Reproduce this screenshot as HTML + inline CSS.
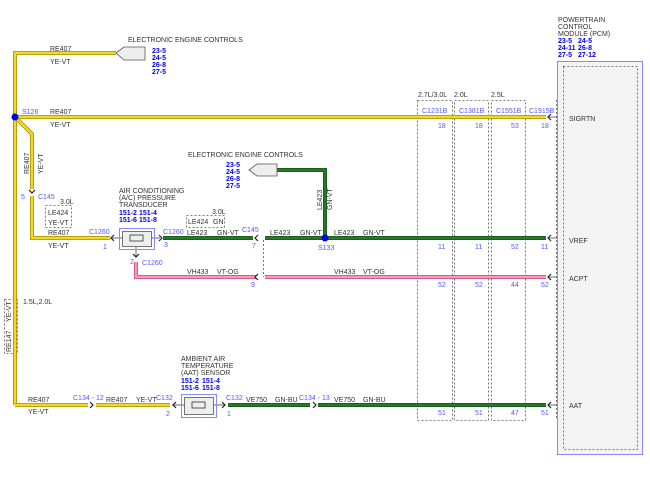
<!DOCTYPE html>
<html><head><style>
html,body{margin:0;padding:0;background:#fff;width:650px;height:481px;overflow:hidden}
svg text{font-family:"Liberation Sans",sans-serif;font-size:7px;fill:#333}
.b{fill:#55f}
.bb{fill:#00e;font-weight:bold}
</style></head><body>
<svg width="650" height="481" viewBox="0 0 650 481" xmlns="http://www.w3.org/2000/svg">
<rect x="557.5" y="61.5" width="85" height="393" fill="#f3f3f3" stroke="#88f" stroke-width="1"/>
<rect x="563.5" y="66.5" width="74" height="383" fill="none" stroke="#555" stroke-dasharray="2,2" stroke-width="0.8"/>
<text x="558" y="22">POWERTRAIN</text><text x="558" y="29">CONTROL</text><text x="558" y="36">MODULE (PCM)</text>
<text class="bb" x="558" y="43">23-5</text><text class="bb" x="578" y="43">24-5</text>
<text class="bb" x="558" y="50">24-11</text><text class="bb" x="578" y="50">26-8</text>
<text class="bb" x="558" y="57">27-5</text><text class="bb" x="578" y="57">27-12</text>
<g fill="none" stroke="#555" stroke-dasharray="2,2" stroke-width="0.8">
<rect x="417.5" y="100.5" width="35" height="320"/>
<rect x="454.5" y="100.5" width="34" height="320"/>
<rect x="491.5" y="100.5" width="34" height="320"/>
<line x1="556.5" y1="100" x2="556.5" y2="420"/>
<rect x="4.5" y="299.5" width="13" height="54"/>
<rect x="45.5" y="205.5" width="26" height="22"/>
<rect x="186.5" y="215.5" width="38" height="12"/>
<line x1="263.5" y1="240" x2="263.5" y2="277"/>
</g>
<text x="418" y="97">2.7L/3.0L</text><text x="454" y="97">2.0L</text><text x="491" y="97">2.5L</text>
<text class="b" x="422" y="113">C1231B</text><text class="b" x="459" y="113">C1381B</text><text class="b" x="496" y="113">C1551B</text><text class="b" x="529" y="113">C1915B</text>
<g fill="none" stroke-linejoin="miter">
<path d="M15 405 V53 H116" stroke="#a89000" stroke-width="4"/>
<path d="M15 405 V53 H116" stroke="#f2d82a" stroke-width="2.4"/>
<path d="M15 117 H546" stroke="#a89000" stroke-width="4"/><path d="M15 117 H546" stroke="#f2d82a" stroke-width="2.4"/>
<path d="M15 117 L32 134 V189 M32 196 V238 H110" stroke="#a89000" stroke-width="4"/>
<path d="M15 117 L32 134 V189 M32 196 V238 H110" stroke="#f2d82a" stroke-width="2.4"/>
<path d="M15 405 H88 M96 405 H170" stroke="#a89000" stroke-width="4"/>
<path d="M15 405 H88 M96 405 H170" stroke="#f2d82a" stroke-width="2.4"/>
<path d="M163 238 H253 M265 238 H546 M325 238 V170 H277" stroke="#1b5e1b" stroke-width="4"/>
<path d="M163 238 H253 M265 238 H546 M325 238 V170 H277" stroke="#2e8a2e" stroke-width="1.2"/>
<path d="M228 405 H310 M318 405 H546" stroke="#1b5e1b" stroke-width="4"/>
<path d="M228 405 H310 M318 405 H546" stroke="#2e8a2e" stroke-width="1.2"/>
<path d="M136 262 V277 H256 M265 277 H546" stroke="#d85a8a" stroke-width="4"/>
<path d="M136 262 V277 H256 M265 277 H546" stroke="#f49cc0" stroke-width="2"/>
<path d="M548 117 H557 M548 238 H557 M548 277 H557 M548 405 H557" stroke="#444" stroke-width="0.8"/>
<path d="M551 114 L548 117 L551 120 M551 235 L548 238 L551 241 M551 274 L548 277 L551 280 M551 402 L548 405 L551 408 M258 235 L255 238 L258 241 M258 274 L255 277 L258 280 M313 402 L316 405 L313 408 M90 402 L93 405 L90 408 M29 190 L32 193 L35 190 M176 402 L173 405 L176 408 M222 402 L225 405 L222 408 M114 235 L111 238 L114 241 M159 235 L162 238 L159 241 M133 254 L136 257 L139 254" stroke="#222" stroke-width="1.2"/>
<path d="M110 238 H160 M136 238 V257 M172 405 H226" stroke="#333" stroke-width="0.7"/>
</g>
<circle cx="15" cy="117" r="3.5" fill="#00e"/>
<circle cx="325" cy="238" r="3.5" fill="#00e"/>
<path d="M116 53 L124 47 H145 V60 H124 Z" fill="#eee" stroke="#555" stroke-width="0.8"/>
<path d="M277 164 H257 L249 170 L257 176 H277 Z" fill="#eee" stroke="#555" stroke-width="0.8"/>
<rect x="119.5" y="228.5" width="35" height="21" fill="none" stroke="#88f"/>
<rect x="122.5" y="231.5" width="29" height="15" fill="#eee" stroke="#555" stroke-width="0.8"/>
<rect x="130" y="235" width="13" height="6" fill="none" stroke="#333" stroke-width="0.8"/>
<rect x="181.5" y="394.5" width="35" height="23" fill="none" stroke="#88f"/>
<rect x="184.5" y="397.5" width="29" height="17" fill="#eee" stroke="#555" stroke-width="0.8"/>
<rect x="192" y="402" width="13" height="6" fill="none" stroke="#333" stroke-width="0.8"/>
<text x="128" y="42">ELECTRONIC ENGINE CONTROLS</text>
<text class="bb" x="152" y="53">23-5</text><text class="bb" x="152" y="60">24-5</text><text class="bb" x="152" y="67">26-8</text><text class="bb" x="152" y="74">27-5</text>
<text x="50" y="51">RE407</text><text x="50" y="64">YE-VT</text>
<text class="b" x="22" y="114">S126</text><text x="50" y="114">RE407</text><text x="50" y="127">YE-VT</text>
<text x="188" y="157">ELECTRONIC ENGINE CONTROLS</text>
<text class="bb" x="226" y="167">23-5</text><text class="bb" x="226" y="174">24-5</text><text class="bb" x="226" y="181">26-8</text><text class="bb" x="226" y="188">27-5</text>
<text x="0" y="0" transform="translate(29,174) rotate(-90)">RE407</text>
<text x="0" y="0" transform="translate(43,174) rotate(-90)">YE-VT</text>
<text x="0" y="0" transform="translate(322,210) rotate(-90)">LE423</text>
<text x="0" y="0" transform="translate(332,210) rotate(-90)">GN-VT</text>
<text x="0" y="0" transform="translate(11,352) rotate(-90)">RE147</text>
<text x="0" y="0" transform="translate(11,322) rotate(-90)">YE-VT</text>
<text x="23" y="304">1.5L,2.0L</text>
<text class="b" x="21" y="199">5</text><text class="b" x="38" y="199">C145</text>
<text x="60" y="204">3.0L</text><text x="48" y="215">LE424</text><text x="48" y="225">YE-VT</text>
<text x="48" y="235">RE407</text><text x="48" y="248">YE-VT</text>
<text class="b" x="89" y="234">C1260</text><text class="b" x="103" y="249">1</text>
<text x="119" y="193">AIR CONDITIONING</text><text x="119" y="200">(A/C) PRESSURE</text><text x="119" y="207">TRANSDUCER</text>
<text class="bb" x="119" y="215">151-2</text><text class="bb" x="139" y="215">151-4</text>
<text class="bb" x="119" y="222">151-6</text><text class="bb" x="139" y="222">151-8</text>
<text class="b" x="163" y="234">C1260</text><text class="b" x="164" y="247">3</text>
<text x="212" y="214">3.0L</text><text x="188" y="224">LE424</text><text x="213" y="224">GN</text>
<text x="187" y="235">LE423</text><text x="217" y="235">GN-VT</text>
<text class="b" x="242" y="232">C145</text><text class="b" x="252" y="248">7</text>
<text x="270" y="235">LE423</text><text x="300" y="235">GN-VT</text>
<text class="b" x="318" y="250">S133</text>
<text x="334" y="235">LE423</text><text x="363" y="235">GN-VT</text>
<text class="b" x="130" y="264">2</text><text class="b" x="142" y="265">C1260</text>
<text x="187" y="274">VH433</text><text x="217" y="274">VT-OG</text><text class="b" x="251" y="287">9</text>
<text x="334" y="274">VH433</text><text x="363" y="274">VT-OG</text>
<text x="181" y="361">AMBIENT AIR</text><text x="181" y="368">TEMPERATURE</text><text x="181" y="375">(AAT) SENSOR</text>
<text class="bb" x="181" y="383">151-2</text><text class="bb" x="202" y="383">151-4</text>
<text class="bb" x="181" y="390">151-6</text><text class="bb" x="202" y="390">151-8</text>
<text x="28" y="402">RE407</text><text x="28" y="414">YE-VT</text>
<text class="b" x="73" y="400">C134 - 12</text>
<text x="106" y="402">RE407</text><text x="136" y="402">YE-VT</text><text class="b" x="156" y="400">C132</text><text class="b" x="166" y="416">2</text>
<text class="b" x="226" y="400">C132</text><text class="b" x="227" y="416">1</text>
<text x="246" y="402">VE750</text><text x="275" y="402">GN-BU</text><text class="b" x="299" y="400">C134 - 13</text>
<text x="334" y="402">VE750</text><text x="363" y="402">GN-BU</text>
<text class="b" x="438" y="128">18</text><text class="b" x="475" y="128">18</text><text class="b" x="511" y="128">53</text><text class="b" x="541" y="128">18</text>
<text class="b" x="438" y="249">11</text><text class="b" x="475" y="249">11</text><text class="b" x="511" y="249">52</text><text class="b" x="541" y="249">11</text>
<text class="b" x="438" y="287">52</text><text class="b" x="475" y="287">52</text><text class="b" x="511" y="287">44</text><text class="b" x="541" y="287">52</text>
<text class="b" x="438" y="415">51</text><text class="b" x="475" y="415">51</text><text class="b" x="511" y="415">47</text><text class="b" x="541" y="415">51</text>
<text x="569" y="121">SIGRTN</text><text x="569" y="243">VREF</text><text x="569" y="281">ACPT</text><text x="569" y="408">AAT</text>
</svg>
</body></html>
